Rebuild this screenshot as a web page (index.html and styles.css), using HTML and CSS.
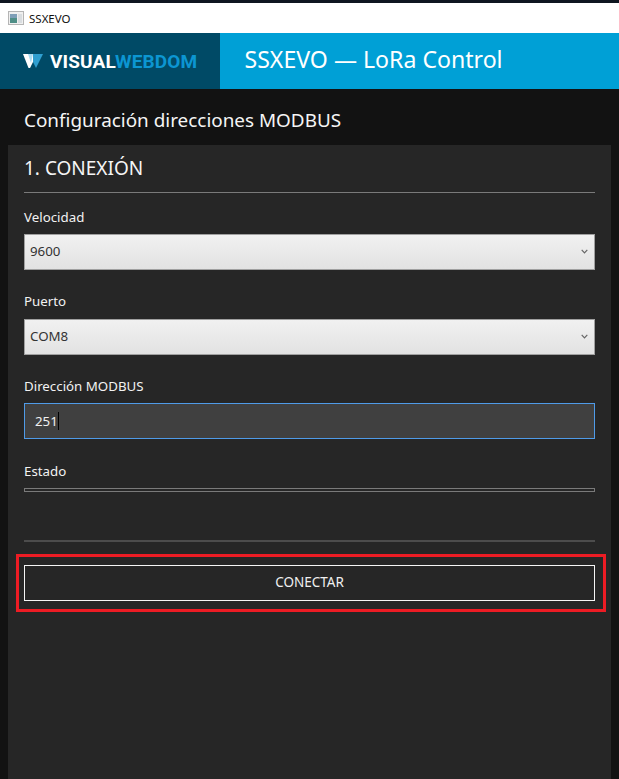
FILE: index.html
```html
<!DOCTYPE html>
<html lang="es">
<head>
<meta charset="utf-8">
<title>SSXEVO</title>
<link rel="stylesheet" href="styles.css">
</head>
<body>
<div class="titlebar">
  <svg class="appicon" width="16" height="14" viewBox="0 0 16 14"><rect x="0.5" y="0.5" width="15" height="13" fill="#f0f0f0" stroke="#b5b5b5"/><rect x="2" y="3" width="7" height="9" fill="#4f8f87"/><rect x="2" y="3" width="7" height="4" fill="#7f9fb8"/><rect x="10" y="3" width="4" height="9" fill="#d9dde0"/></svg>
  <span class="titlebar-text">SSXEVO</span>
</div>
<header class="header">
  <div class="brand">
    <svg class="brand-mark" width="20" height="14" viewBox="0 0 20 14"><polygon points="0,0 9,0 7,14 5.5,14" fill="#fff"/><polygon points="4,0 10,0 10,8 7,14" fill="#fff"/><polygon points="10,0 20,0 13,14 10,8" fill="#2f9fd0"/><polygon points="5,0 10,0 8,9" fill="#a9dcf2"/></svg>
    <span class="brand-name">VISUAL<span class="brand-accent">WEBDOM</span></span>
  </div>
  <div class="apptitle">SSXEVO — LoRa Control</div>
</header>
<main class="main">
  <h1 class="pagetitle">Configuración direcciones MODBUS</h1>
  <section class="card">
    <h2 class="cardtitle">1. CONEXIÓN</h2>
    <div class="field field-first">
      <label class="label">Velocidad</label>
      <div class="select"><span>9600</span><svg class="chev" width="7" height="5" viewBox="0 0 7 5"><path d="M0.7 0.8 L3.5 3.8 L6.3 0.8" fill="none" stroke="#666" stroke-width="1.2"/></svg></div>
    </div>
    <div class="field">
      <label class="label label-raised">Puerto</label>
      <div class="select"><span>COM8</span><svg class="chev" width="7" height="5" viewBox="0 0 7 5"><path d="M0.7 0.8 L3.5 3.8 L6.3 0.8" fill="none" stroke="#666" stroke-width="1.2"/></svg></div>
    </div>
    <div class="field field-tight">
      <label class="label">Dirección MODBUS</label>
      <div class="input"><span>251</span><span class="caret"></span></div>
    </div>
    <div class="field">
      <label class="label">Estado</label>
      <div class="status"></div>
    </div>
    <div class="rule"></div>
    <div class="highlight">
      <button class="button" type="button">CONECTAR</button>
    </div>
  </section>
</main>
</body>
</html>
```
FILE: styles.css
```css
html, body {
  margin: 0;
  height: 100%;
}
body {
  width: 619px;
  height: 779px;
  overflow: hidden;
  display: flex;
  flex-direction: column;
  background: #121212;
  border-top: 3px solid #0e1620;
  box-sizing: border-box;
  font-family: "Noto Sans", "Open Sans", sans-serif;
  color: #f0f0f0;
}
.titlebar {
  height: 30px;
  flex: none;
  background: #fff;
  display: flex;
  align-items: center;
  padding-left: 8px;
  gap: 5px;
  box-sizing: border-box;
}
.titlebar-text {
  font-size: 11.5px;
  color: #111;
}
.header {
  height: 56px;
  flex: none;
  display: flex;
  background: #00a0d6;
}
.brand {
  width: 220px;
  background: #004a66;
  display: flex;
  align-items: center;
  padding-left: 23px;
  gap: 7px;
  box-sizing: border-box;
}
.brand-name {
  font-family: Roboto, sans-serif;
  font-weight: 700;
  font-size: 19px;
  letter-spacing: 0.15px;
  color: #fff;
}
.brand-accent {
  color: #0c96d2;
}
.apptitle {
  padding-left: 24.5px;
  font-size: 23.1px;
  line-height: 52px;
  color: #fff;
}
.main {
  flex: 1;
  display: flex;
  flex-direction: column;
  min-height: 0;
  padding: 0 8px;
}
.pagetitle {
  margin: 0;
  height: 56px;
  font-weight: 400;
  font-size: 18.9px;
  line-height: 63px;
  padding-left: 16px;
  color: #f5f5f5;
}
.card {
  flex: 1;
  background: #262626;
  padding: 0 16px;
}
.cardtitle {
  margin: 0;
  height: 47px;
  border-bottom: 1px solid #7a7a7a;
  font-weight: 400;
  font-size: 19px;
  line-height: 46px;
  color: #f5f5f5;
}
.field {
  margin-top: 22px;
}
.field-first {
  margin-top: 14px;
}
.field-tight {
  margin-top: 21px;
}
.label {
  display: block;
  height: 20px;
  margin-bottom: 7px;
  font-size: 13.3px;
  line-height: 20px;
  color: #f2f2f2;
}
.label-raised {
  line-height: 18px;
}
.select {
  height: 36px;
  box-sizing: border-box;
  border: 1px solid #a0a0a0;
  background: linear-gradient(#f1f1f1, #e2e2e2);
  color: #333;
  font-size: 13.3px;
  display: flex;
  align-items: center;
  justify-content: space-between;
  padding: 0 6px 2px 5px;
}
.input {
  height: 36px;
  box-sizing: border-box;
  border: 1px solid #4f9be8;
  background: #404040;
  color: #f0f0f0;
  font-size: 13.3px;
  display: flex;
  align-items: center;
  padding: 0 10px;
}
.caret {
  width: 1px;
  height: 18px;
  background: #000;
}
.status {
  height: 4px;
  box-sizing: border-box;
  border: 1px solid #7a7a7a;
  background: #262626;
}
.rule {
  margin-top: 48px;
  height: 2px;
  background: #4c4c4c;
}
.highlight {
  margin: 12px -8px 0 -8px;
  padding: 8px 8px 8px 5px;
  border: 3px solid #ed1c24;
  width: 590px;
  box-sizing: border-box;
}
.button {
  display: block;
  width: 571px;
  height: 36px;
  box-sizing: border-box;
  border: 1px solid #f5f5f5;
  background: transparent;
  color: #f0f0f0;
  font-family: inherit;
  font-size: 13.5px;
  padding: 0 0 2px;
}
```
